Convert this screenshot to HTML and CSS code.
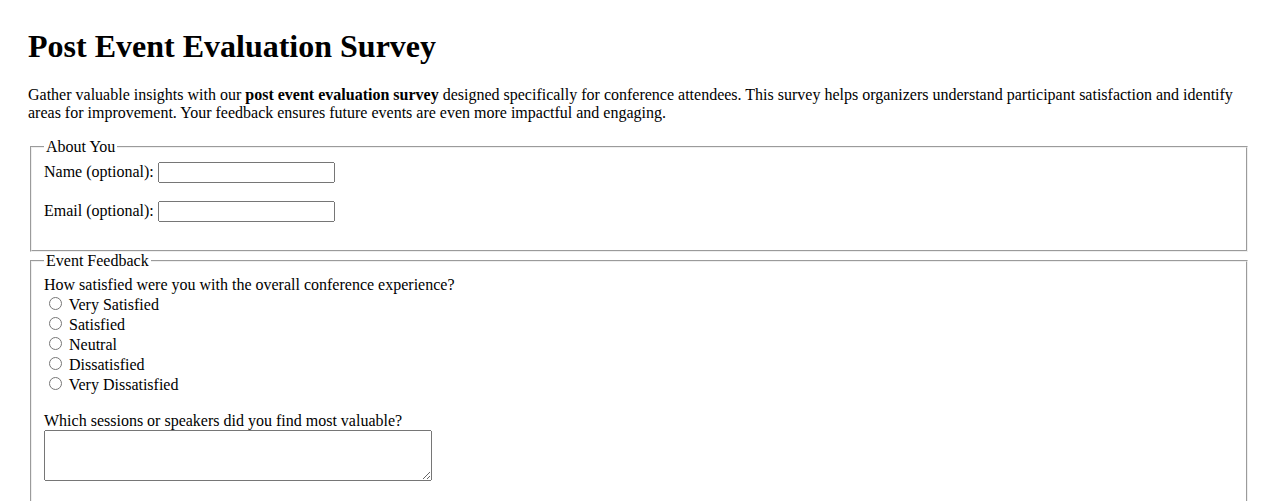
FILE: index.html
```html
<!DOCTYPE html>
<html lang="en">
<head>
<meta charset="utf-8">
<title>Post Event Evaluation Survey</title>
<link rel="stylesheet" href="styles.css">
</head>
<body>
<h1 class="title">Post Event Evaluation Survey</h1>
<p class="intro">Gather valuable insights with our <strong>post event evaluation survey</strong> designed specifically for conference attendees. This survey helps organizers understand participant satisfaction and identify areas for improvement. Your feedback ensures future events are even more impactful and engaging.</p>
<form class="survey">
  <fieldset class="section">
    <legend>About You</legend>
    <div class="group">
      <label for="name">Name (optional):</label>
      <input type="text" id="name" name="name">
    </div>
    <div class="group">
      <label for="email">Email (optional):</label>
      <input type="email" id="email" name="email">
    </div>
  </fieldset>
  <fieldset class="section">
    <legend>Event Feedback</legend>
    <div class="group group-first">
      <label>How satisfied were you with the overall conference experience?</label><br>
      <label><input type="radio" name="sat" value="5"> Very Satisfied</label><br>
      <label><input type="radio" name="sat" value="4"> Satisfied</label><br>
      <label><input type="radio" name="sat" value="3"> Neutral</label><br>
      <label><input type="radio" name="sat" value="2"> Dissatisfied</label><br>
      <label><input type="radio" name="sat" value="1"> Very Dissatisfied</label>
    </div>
    <div class="group">
      <label for="sessions">Which sessions or speakers did you find most valuable?</label><br>
      <textarea id="sessions" name="sessions" rows="3"></textarea>
    </div>
  </fieldset>
</form>
</body>
</html>
```
FILE: styles.css
```css
body {
  margin: 0;
  padding: 28px;
  font-family: "Liberation Serif", "Times New Roman", serif;
  font-size: 16px;
  color: #000;
  background: #fff;
}
.title {
  font-size: 32px;
  margin: 0 0 21px;
}
.intro {
  margin: 0 0 16px;
}
.survey {
  margin: 0;
}
.section {
  margin: 0 2px;
}
.group {
  margin-bottom: 18px;
}
.group-first {
  padding-top: 1px;
}
input[type="text"],
input[type="email"] {
  font-family: "Liberation Sans", Arial, sans-serif;
  font-size: 13.333px;
  width: 177px;
  height: 21px;
  box-sizing: border-box;
}
textarea {
  font-family: "Liberation Mono", monospace;
  font-size: 13.333px;
  width: 388px;
  height: 51px;
  box-sizing: border-box;
}
```
